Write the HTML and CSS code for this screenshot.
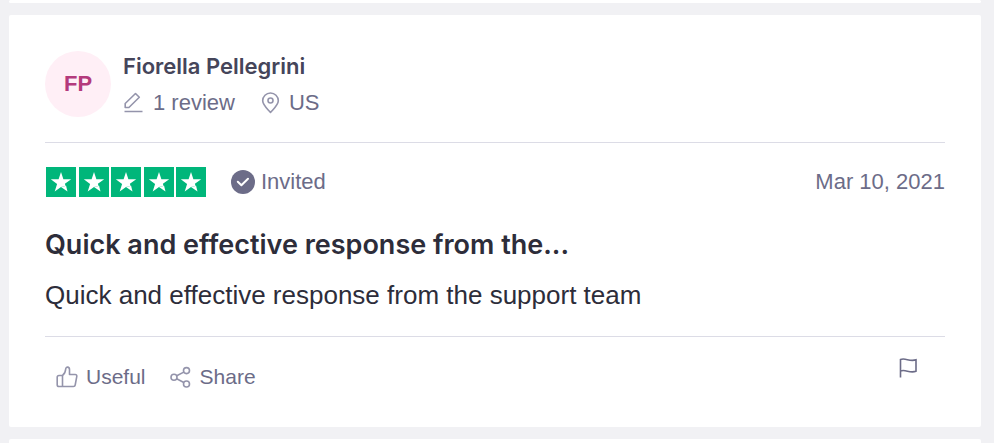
FILE: index.html
```
<!DOCTYPE html>
<html lang="en">

<head>
    <meta charset="UTF-8">
    <meta name="viewport" content="width=device-width, initial-scale=1.0">
    <title>Reviews</title>
    <link rel="stylesheet" href="styles.css">
</head>

<body>
    <svg width="0" height="0" class="sprite" aria-hidden="true">
        <symbol id="star" viewBox="0 0 30 30">
            <path d="M15 5l2.400 7.300h7.800l-6.300 4.500.7 2.100L15 20l-6.300 4.500 2.400-7.600-6.300-4.600h7.800z" />
            <path d="M15 20l4.600-1.100.5-.1 1.400 5.700z" />
        </symbol>
    </svg>

    <main class="review-list">
        <div class="card card-prev"></div>

        <article class="card review">
            <header class="consumer">
                <div class="avatar">FP</div>
                <div class="consumer-info">
                    <a href="#" class="consumer-name">Fiorella Pellegrini</a>
                    <div class="consumer-details">
                        <span class="detail">
                            <svg class="icon" viewBox="0 0 22 22" fill="none" stroke="currentColor" stroke-width="1.6">
                                <path d="M1.500 19.500h18M2.200 15.500v-4L12.500 1.500l3.800 3.800L5.900 15.500z" stroke-linejoin="round" />
                            </svg>
                            <span>1 review</span>
                        </span>
                        <span class="detail">
                            <svg class="icon" viewBox="0 0 22 22" fill="none" stroke="currentColor" stroke-width="1.6">
                                <path d="M11.500 20.500C8.500 17 3.700 13 3.700 8.800a7.800 7.800 0 0 1 15.600 0c0 4.200-4.800 8.200-7.800 11.700z" stroke-linejoin="round" />
                                <circle cx="11.500" cy="8.500" r="2.500" />
                            </svg>
                            <span>US</span>
                        </span>
                    </div>
                </div>
            </header>

            <section class="content">
                <div class="content-header">
                    <div class="stars" role="img" aria-label="5 out of 5 stars">
                        <svg class="star"><use href="#star" /></svg>
                        <svg class="star"><use href="#star" /></svg>
                        <svg class="star"><use href="#star" /></svg>
                        <svg class="star"><use href="#star" /></svg>
                        <svg class="star"><use href="#star" /></svg>
                    </div>
                    <button type="button" class="invited">
                        <svg class="badge" viewBox="0 0 24 24">
                            <circle cx="12" cy="12" r="12" fill="currentColor" />
                            <path d="M6.800 11.800l3.600 3.500L17 8.800" fill="none" stroke="#fff" stroke-width="2" stroke-linecap="round" stroke-linejoin="round" />
                        </svg>
                        <span>Invited</span>
                    </button>
                    <time class="date" datetime="2021-03-10">Mar 10, 2021</time>
                </div>
                <h2 class="title"><a href="#">Quick and effective response from the...</a></h2>
                <p class="text">Quick and effective response from the support team</p>
            </section>

            <footer class="actions">
                <button type="button" class="action">
                    <svg class="icon" viewBox="0 0 22 22" fill="none" stroke="currentColor" stroke-width="1.6" stroke-linejoin="round">
                        <path d="M6.500 20.500H3a1.800 1.800 0 0 1-1.800-1.800v-7.400A1.800 1.800 0 0 1 3 9.500h3.500zM6.500 9.500c2-1.500 3-4 3.200-6.500.1-2.600 3.800-2.500 3.800.5V8.500h5.700a1.600 1.600 0 0 1 1.600 1.900l-1.600 8.600a1.800 1.800 0 0 1-1.800 1.500H6.500" />
                    </svg>
                    <span>Useful</span>
                </button>
                <button type="button" class="action">
                    <svg class="icon" viewBox="0 0 22 22" fill="none" stroke="currentColor" stroke-width="1.6">
                        <circle cx="4" cy="11.300" r="3" />
                        <circle cx="16.500" cy="4.600" r="3" />
                        <circle cx="16.500" cy="18" r="3" />
                        <path d="M6.700 9.800l7.100-3.700M6.700 12.800l7.100 3.700" />
                    </svg>
                    <span>Share</span>
                </button>
                <button type="button" class="flag" aria-label="Report review">
                    <svg class="icon" viewBox="0 0 22 22" fill="none" stroke="currentColor" stroke-width="1.6">
                        <path d="M3.500 20.500V2.500c5-2 9 2.500 15.500.3v11.500c-6.500 2.200-10.500-2.300-15.500-.3" />
                    </svg>
                </button>
            </footer>
        </article>

        <div class="card card-next"></div>
    </main>
</body>

</html>
```
FILE: styles.css
```
* {
    box-sizing: border-box;
}

body {
    margin: 0;
    font-family: "Liberation Sans", Arial, sans-serif;
    font-size: 22px;
    line-height: 24px;
    color: #2d2d3a;
    background-color: #f1f1f4;
}

a {
    color: inherit;
    text-decoration: none;
}

button {
    display: flex;
    align-items: center;
    padding: 0;
    border: none;
    background: none;
    font: inherit;
    color: inherit;
    cursor: pointer;
}

.sprite {
    display: block;
}

.review-list {
    display: flex;
    flex-direction: column;
    gap: 12px;
    padding: 0 13px 0 9px;
}

.card {
    background-color: #fff;
    border-radius: 2px;
}

.card-prev {
    height: 3px;
}

.card-next {
    height: 4px;
    border-radius: 2px 2px 0 0;
}

.review {
    padding: 36px 36px 30px;
}

.icon {
    flex: none;
    width: 22px;
    height: 22px;
    color: #9494ab;
}

/* Reviewer */
.consumer {
    display: flex;
    gap: 12px;
    padding-bottom: 25px;
    border-bottom: 1px solid #dcdce6;
}

.avatar {
    display: flex;
    align-items: center;
    justify-content: center;
    width: 66px;
    height: 66px;
    border-radius: 50%;
    background-color: #ffeff6;
    color: #b43a7c;
    font-weight: 700;
}

.consumer-info {
    display: flex;
    flex-direction: column;
    gap: 13px;
    padding-top: 3px;
}

.consumer-name {
    color: #45455a;
    font-family: Inter, Arial, sans-serif;
    font-weight: 600;
}

.consumer-details {
    display: flex;
    gap: 24px;
    color: #6c6c88;
}

.detail {
    display: flex;
    align-items: center;
    gap: 8px;
}

/* Review content */
.content {
    padding: 24px 0 26px;
    border-bottom: 1px solid #dcdce6;
}

.content-header {
    display: flex;
    align-items: center;
    color: #6c6c88;
}

.stars {
    display: flex;
    justify-content: space-between;
    width: 160px;
    margin-left: 1px;
}

.star {
    width: 30px;
    height: 30px;
    background-color: #00b67a;
    fill: #fff;
}

.invited {
    gap: 6px;
    margin-left: 25px;
}

.badge {
    width: 24px;
    height: 24px;
}

.date {
    margin-left: auto;
}

.title {
    margin: 30px 0 17px;
    font-family: Inter, Arial, sans-serif;
    font-size: 27px;
    line-height: 36px;
    font-weight: 600;
}

.text {
    margin: 0;
    font-size: 26px;
    line-height: 30px;
}

/* Actions */
.actions {
    display: flex;
    align-items: center;
    gap: 24px;
    padding: 20px 26px 0 11px;
    color: #6c6c88;
    font-size: 21px;
}

.action {
    gap: 8px;
}

.flag {
    margin-left: auto;
    margin-bottom: 18px;
}

.flag .icon {
    color: #6c6c88;
}
```
